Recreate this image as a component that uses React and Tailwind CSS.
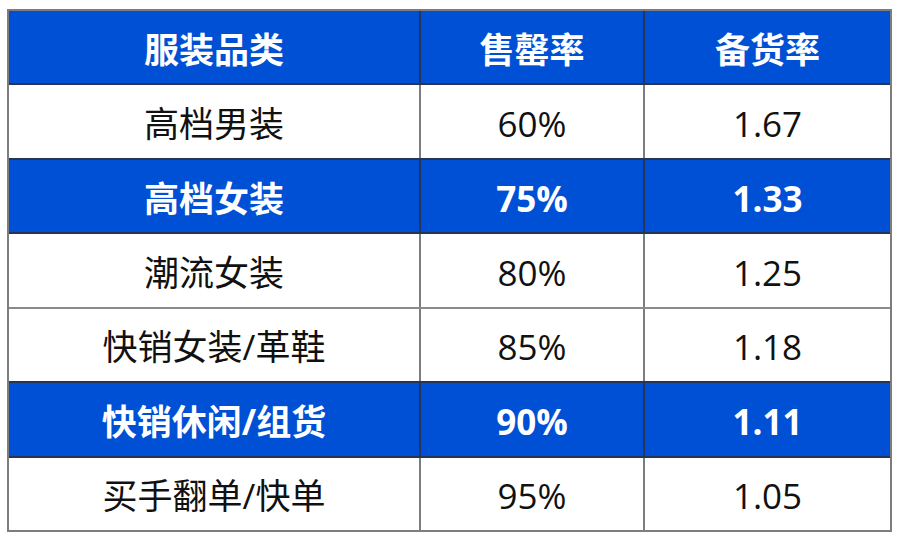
import React from 'react';

const rows = [
  { name: '高档男装', sell: '60%', stock: '1.67', hot: false },
  { name: '高档女装', sell: '75%', stock: '1.33', hot: true },
  { name: '潮流女装', sell: '80%', stock: '1.25', hot: false },
  { name: '快销女装/革鞋', sell: '85%', stock: '1.18', hot: false },
  { name: '快销休闲/组货', sell: '90%', stock: '1.11', hot: true },
  { name: '买手翻单/快单', sell: '95%', stock: '1.05', hot: false },
];

const Row = ({ cells, blue, darkTop, first }) => {
  const rowClass = blue
    ? 'bg-[#0050d6] text-white font-bold'
    : 'bg-white text-[#111] font-normal';
  const topClass = first
    ? ''
    : darkTop
    ? 'border-t-2 border-[#26345a]'
    : 'border-t-2 border-[#8a8a8a]';
  const divider = blue ? 'border-r-2 border-[#26345a]' : 'border-r-2 border-[#7d7d7d]';
  return (
    <div className={`flex flex-1 ${rowClass} ${topClass}`}>
      <div className={`w-[412px] flex items-center justify-center pt-[4px] ${divider}`}>{cells[0]}</div>
      <div className={`w-[224px] flex items-center justify-center pt-[4px] ${divider}`}>{cells[1]}</div>
      <div className="flex-1 flex items-center justify-center pt-[4px]">{cells[2]}</div>
    </div>
  );
};

export default function App() {
  return (
    <div className="w-[900px] h-[541px] bg-white pl-[7px] pt-[9px]">
      <div
        className="w-[885px] h-[523px] flex flex-col border-2 border-[#7d7d7d] text-[35px] leading-none"
        style={{ fontFamily: '"Open Sans", "Noto Sans CJK SC", sans-serif' }}
      >
        <Row cells={['服装品类', '售罄率', '备货率']} blue first />
        {rows.map((r, i) => {
          const prevBlue = i === 0 ? true : rows[i - 1].hot;
          return (
            <Row
              key={r.name}
              cells={[r.name, r.sell, r.stock]}
              blue={r.hot}
              darkTop={r.hot || prevBlue}
            />
          );
        })}
      </div>
    </div>
  );
}
